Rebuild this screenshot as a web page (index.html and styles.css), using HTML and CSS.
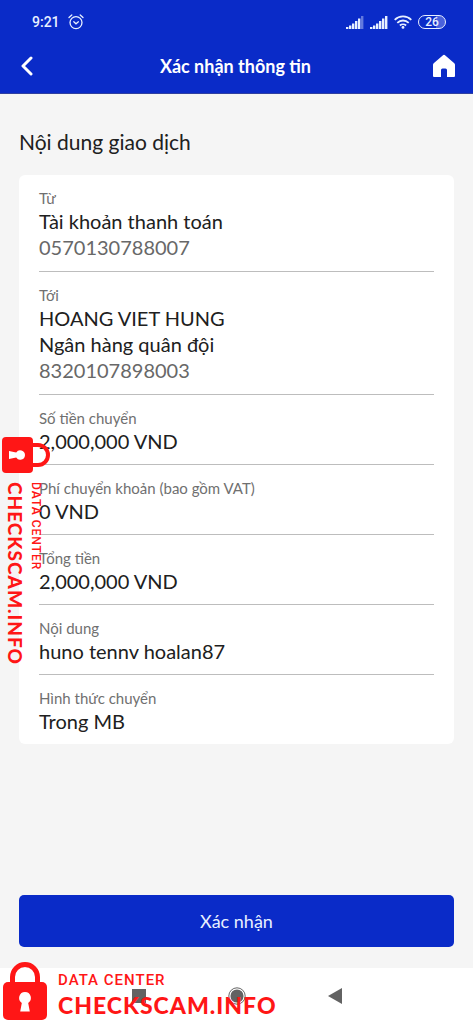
FILE: index.html
```
<!DOCTYPE html>
<html lang="vi">
<head>
<meta charset="utf-8">
<meta name="viewport" content="width=device-width, initial-scale=1">
<title>Xác nhận thông tin</title>
<link rel="stylesheet" href="styles.css">
</head>
<body>
<div class="screen">
  <header class="top">
    <div class="status">
      <span class="time">9:21</span>
      <svg class="alarm" width="16" height="16" viewBox="0 0 16 16" fill="none" stroke="currentColor" stroke-width="1.3" stroke-linecap="round"><circle cx="8" cy="8.6" r="6"/><path d="M1 3.6 3.8 1M15 3.6 12.2 1M5.8 7.8 8 9.8l2.4-2"/></svg>
      <span class="indicators">
        <svg width="18" height="13" viewBox="0 0 18 13" fill="currentColor"><path d="M0 11h2.400v2H0zM3 9.500h2.400V13H3zM6 7.500h2.400V13H6zM9 5h2.400v8H9zM12 2.500h2.400V13H12z"/><path opacity=".4" d="M15 0h2.400v13H15z"/></svg>
        <svg width="18" height="13" viewBox="0 0 18 13" fill="currentColor"><path d="M0 11h2.400v2H0zM3 9.500h2.400V13H3zM6 7.500h2.400V13H6zM9 5h2.400v8H9zM12 2.500h2.400V13H12zM15 0h2.400v13H15z"/></svg>
        <svg width="18" height="14" viewBox="0 0 18 14" fill="none" stroke="currentColor" stroke-width="1.8"><path d="M.7 4.800a12 12 0 0 1 16.600 0M3.300 7.800a8.200 8.200 0 0 1 11.400 0M5.900 10.500a4.600 4.600 0 0 1 6.200 0"/><circle cx="9" cy="12.400" r="1.400" fill="currentColor" stroke="none"/></svg>
        <span class="battery">26</span>
      </span>
    </div>
    <div class="bar">
      <button class="icon-button" aria-label="Quay lại"><svg width="14" height="20" viewBox="0 0 14 20" fill="none" stroke="currentColor" stroke-width="3" stroke-linecap="round" stroke-linejoin="round"><path d="M11 2 3 10l8 8"/></svg></button>
      <h1 class="title">Xác nhận thông tin</h1>
      <button class="icon-button" aria-label="Trang chủ"><svg width="24" height="24" viewBox="0 0 24 24" fill="currentColor"><path d="M12 .8Q12.700.8 13.300 1.400L22.300 9.200Q23 9.900 23 10.800V22Q23 23 22 23H15V16Q15 14.500 13.500 14.500H10.500Q9 14.500 9 16V23H2Q1 23 1 22V10.800Q1 9.900 1.700 9.200L10.700 1.400Q11.300.8 12 .8Z"/></svg></button>
    </div>
  </header>

  <main class="content">
    <h2 class="heading">Nội dung giao dịch</h2>
    <dl class="card">
      <div class="row"><dt>Từ</dt><dd>Tài khoản thanh toán</dd><dd class="account">0570130788007</dd></div>
      <div class="row"><dt>Tới</dt><dd>HOANG VIET HUNG</dd><dd>Ngân hàng quân đội</dd><dd class="account">8320107898003</dd></div>
      <div class="row"><dt>Số tiền chuyển</dt><dd>2,000,000 VND</dd></div>
      <div class="row"><dt>Phí chuyển khoản (bao gồm VAT)</dt><dd>0 VND</dd></div>
      <div class="row"><dt>Tổng tiền</dt><dd>2,000,000 VND</dd></div>
      <div class="row"><dt>Nội dung</dt><dd>huno tennv hoalan87</dd></div>
      <div class="row"><dt>Hình thức chuyển</dt><dd>Trong MB</dd></div>
    </dl>
    <button class="confirm">Xác nhận</button>
  </main>

  <nav class="system" aria-label="Điều hướng">
    <button class="nav-button" aria-label="Gần đây"><svg width="14" height="14" viewBox="0 0 14 14"><path fill="currentColor" d="M0 0h14v14H0z"/></svg></button>
    <button class="nav-button" aria-label="Màn hình chính"><svg width="22" height="22" viewBox="0 0 22 22"><circle cx="11" cy="11" r="10" fill="none" stroke="currentColor" stroke-width="1.200"/><circle cx="11" cy="11" r="8" fill="currentColor"/></svg></button>
    <button class="nav-button" aria-label="Trở lại"><svg width="14" height="16" viewBox="0 0 14 16"><path fill="currentColor" d="M14 0v16L0 8z"/></svg></button>
  </nav>

  <div class="mark mark-bottom">
    <svg width="44" height="59" viewBox="0 0 44 59"><path d="M9.500 24V16a12.500 12.500 0 0 1 25 0v8" fill="none" stroke="currentColor" stroke-width="5"/><rect y="21" width="44" height="38" rx="5" fill="currentColor"/><path fill="#fff" d="M22 31a6 6 0 0 1 3.200 11l1.600 8.500h-9.600L18.800 42A6 6 0 0 1 22 31z"/></svg>
    <div class="mark-text"><span class="mark-small">DATA CENTER</span><span class="mark-large">CHECKSCAM.INFO</span></div>
  </div>
  <div class="mark mark-side">
    <svg width="48" height="36" viewBox="0 0 48 36"><path d="M29 8h7a10 10 0 0 1 0 20h-7" fill="none" stroke="currentColor" stroke-width="4"/><rect width="31" height="36" rx="4" fill="currentColor"/><path fill="#fff" d="M23 18a4.800 4.800 0 0 1-8.800 2.600L7 22v-8l7.200 1.400A4.800 4.800 0 0 1 23 18z"/></svg>
    <div class="mark-text"><span class="mark-small">DATA CENTER</span><span class="mark-large">CHECKSCAM.INFO</span></div>
  </div>
</div>
</body>
</html>
```
FILE: styles.css
```
* { box-sizing: border-box; }

body {
  margin: 0;
  background: #f5f5f5;
  color: #202020;
  font-family: Lato, "Noto Sans", sans-serif;
}

h1, h2, dl, dd { margin: 0; font-weight: 400; }

button {
  padding: 0;
  border: 0;
  background: none;
  color: inherit;
  font-family: inherit;
}

svg { display: block; }

.screen {
  position: relative;
  display: flex;
  flex-direction: column;
  min-height: 100vh;
}

.top {
  padding-bottom: 6px;
  background: #0a2bc8;
  color: #e8f0ff;
  border-bottom: 1px solid #3040a0;
}

.status {
  display: flex;
  align-items: center;
  height: 44px;
  padding: 0 27px 0 32px;
}

.time {
  font: 500 14px/20px Roboto, sans-serif;
}

.alarm { margin-left: 8px; }

.indicators {
  display: flex;
  align-items: center;
  gap: 6px;
  margin-left: auto;
}

.battery {
  width: 28px;
  border: 1px solid currentColor;
  border-radius: 7px;
  background: linear-gradient(90deg, transparent 65%, #4a62dc 65%);
  font: 500 12px/12px Roboto, sans-serif;
  text-align: center;
}

.bar {
  display: flex;
  align-items: center;
  justify-content: space-between;
  height: 43px;
  padding: 0 17px 0 15px;
  color: #fff;
}

.icon-button {
  display: flex;
  align-items: center;
  justify-content: center;
  min-width: 24px;
}

.title {
  font-size: 18px;
  font-weight: 700;
  line-height: 24px;
}

.content {
  flex: 1;
  display: flex;
  flex-direction: column;
  padding: 34px 19px 21px;
}

.heading {
  margin-bottom: 19px;
  font-size: 21px;
  line-height: 28px;
}

.card {
  padding: 0 20px;
  border-radius: 6px;
  background: #fff;
}

.row {
  padding: 13px 0 10px;
  border-bottom: 1px solid #bdbdbd;
}

.row:last-child { border-bottom: 0; }

.row dt {
  color: #707070;
  font-size: 15px;
  line-height: 20px;
}

.row dd {
  font-size: 20px;
  line-height: 26px;
}

.row .account {
  padding-bottom: 1px;
  color: #686868;
}

.confirm {
  height: 52px;
  margin-top: auto;
  border-radius: 5px;
  background: #0a2bc8;
  color: #e8f0ff;
  font-size: 18px;
}

.system {
  display: flex;
  justify-content: center;
  gap: 80px;
  height: 56px;
  background: #fff;
  color: #626262;
}

.nav-button {
  display: flex;
  align-items: center;
  justify-content: center;
  width: 18px;
}

.mark {
  position: absolute;
  color: #ff1616;
  pointer-events: none;
}

.mark-bottom {
  left: 3px;
  bottom: 4px;
  display: flex;
  align-items: flex-end;
  gap: 11px;
}

.mark-text {
  display: flex;
  flex-direction: column;
  white-space: nowrap;
}

.mark-small {
  font: 500 15px/20px Roboto, sans-serif;
  letter-spacing: 1px;
}

.mark-large {
  font-size: 23px;
  font-weight: 900;
  line-height: 30px;
  letter-spacing: 1px;
}

.mark-side {
  left: 2px;
  top: 437px;
}

.mark-side .mark-text {
  margin-top: 9px;
  writing-mode: vertical-rl;
}

.mark-side .mark-small {
  font-size: 12px;
  line-height: 16px;
}

.mark-side .mark-large {
  font-size: 19px;
  line-height: 26px;
}
```
